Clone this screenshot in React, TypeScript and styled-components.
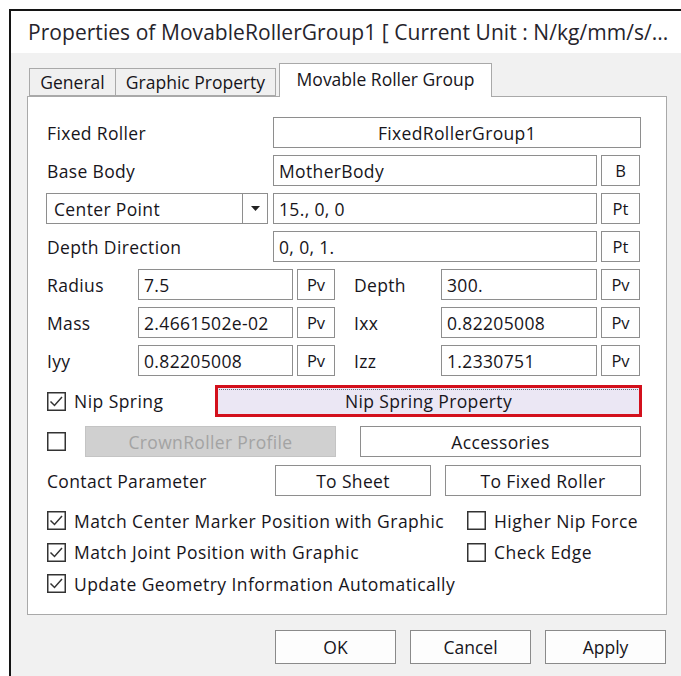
import styled, { createGlobalStyle } from "styled-components";

const GlobalStyle = createGlobalStyle`
  html, body {
    margin: 0;
    padding: 0;
    background: #ffffff;
    overflow: hidden;
  }
  body {
    font-family: "Open Sans", "Noto Sans", "Liberation Sans", sans-serif;
    color: #17151b;
  }
`;

function CheckMark({ checked }: { checked: boolean }) {
  return (
    <svg width="19" height="19" viewBox="0 0 19 19">
      <rect x="0.75" y="0.75" width="17.5" height="17.5" fill="#ffffff" stroke="#333333" strokeWidth="1.5" />
      {checked ? (
        <polyline points="3.5,9.5 7.5,13.5 15,5" fill="none" stroke="#333333" strokeWidth="1.5" />
      ) : null}
    </svg>
  );
}

function Check({ label, checked }: { label: string; checked: boolean }) {
  return (
    <CheckLine>
      <CheckMark checked={checked} />
      <span>{label}</span>
    </CheckLine>
  );
}

function App() {
  return (
    <>
      <GlobalStyle />
      <Dialog>
        <TitleBar>Properties of MovableRollerGroup1 [ Current Unit : N/kg/mm/s/...</TitleBar>
        <Body>
          <Tabs>
            <Tab $w={87}>General</Tab>
            <Tab $w={161}>Graphic Property</Tab>
            <Tab $w={213} $active>Movable Roller Group</Tab>
          </Tabs>
          <Panel>
            <Row>
              <Label $w={226}>Fixed Roller</Label>
              <PushButton $w={368}>FixedRollerGroup1</PushButton>
            </Row>
            <Row>
              <Label $w={226}>Base Body</Label>
              <Field $w={324}>MotherBody</Field>
              <SmallButton>B</SmallButton>
            </Row>
            <Row>
              <Combo>
                <ComboText>Center Point</ComboText>
                <ComboArrow>
                  <svg width="9" height="5" viewBox="0 0 9 5">
                    <polygon points="0,0 9,0 4.5,5" fill="#222" />
                  </svg>
                </ComboArrow>
              </Combo>
              <Field $w={324}>15., 0, 0</Field>
              <SmallButton>Pt</SmallButton>
            </Row>
            <Row>
              <Label $w={226}>Depth Direction</Label>
              <Field $w={324}>0, 0, 1.</Field>
              <SmallButton>Pt</SmallButton>
            </Row>
            <Row>
              <Label $w={91}>Radius</Label>
              <Field $w={155}>7.5</Field>
              <SmallButton $w={38}>Pv</SmallButton>
              <Label $w={87} $ml={19}>Depth</Label>
              <Field $w={156}>300.</Field>
              <SmallButton>Pv</SmallButton>
            </Row>
            <Row>
              <Label $w={91}>Mass</Label>
              <Field $w={155}>2.4661502e-02</Field>
              <SmallButton $w={38}>Pv</SmallButton>
              <Label $w={87} $ml={19}>Ixx</Label>
              <Field $w={156}>0.82205008</Field>
              <SmallButton>Pv</SmallButton>
            </Row>
            <Row>
              <Label $w={91}>Iyy</Label>
              <Field $w={155}>0.82205008</Field>
              <SmallButton $w={38}>Pv</SmallButton>
              <Label $w={87} $ml={19}>Izz</Label>
              <Field $w={156}>1.2330751</Field>
              <SmallButton>Pv</SmallButton>
            </Row>
            <Row $mt={2} $h={32}>
              <CheckSlot $w={168}>
                <Check label="Nip Spring" checked />
              </CheckSlot>
              <FocusButton>Nip Spring Property</FocusButton>
            </Row>
            <Row $mt={2}>
              <CheckSlot $w={38}>
                <CheckMark checked={false} />
              </CheckSlot>
              <PushButton $w={251} $disabled>CrownRoller Profile</PushButton>
              <Spacer $w={24} />
              <PushButton $w={281}>Accessories</PushButton>
            </Row>
            <Row $mt={1}>
              <Label $w={228}>Contact Parameter</Label>
              <PushButton $w={156}>To Sheet</PushButton>
              <Spacer $w={14} />
              <PushButton $w={196}>To Fixed Roller</PushButton>
            </Row>
            <Options>
              <Check label="Match Center Marker Position with Graphic" checked />
              <Check label="Higher Nip Force" checked={false} />
              <Check label="Match Joint Position with Graphic" checked />
              <Check label="Check Edge" checked={false} />
              <Check label="Update Geometry Information Automatically" checked />
            </Options>
          </Panel>
          <Footer>
            <DialogButton>OK</DialogButton>
            <DialogButton>Cancel</DialogButton>
            <DialogButton>Apply</DialogButton>
          </Footer>
        </Body>
      </Dialog>
    </>
  );
}

const Dialog = styled.div`
  margin: 9px 0 0 9px;
  height: 667px;
  border-top: 2px solid #141414;
  border-left: 2px solid #141414;
  background: #f1f1f1;
  display: flex;
  flex-direction: column;
  overflow: hidden;
`;

const TitleBar = styled.div`
  height: 42px;
  flex: none;
  background: #ffffff;
  display: flex;
  align-items: center;
  padding-left: 17px;
  font-size: 21px;
  letter-spacing: 0.05px;
  color: #26242c;
  white-space: nowrap;
`;

const Body = styled.div`
  padding-left: 16px;
  display: flex;
  flex-direction: column;
`;

const Tabs = styled.div`
  display: flex;
  align-items: flex-end;
  height: 43px;
  padding-left: 2px;
`;

const Tab = styled.div<{ $w: number; $active?: boolean }>`
  width: ${(p) => p.$w}px;
  height: ${(p) => (p.$active ? 34 : 28)}px;
  box-sizing: border-box;
  border: 1px solid #a9a9a9;
  border-bottom: ${(p) => (p.$active ? "none" : "1px solid #a9a9a9")};
  margin-left: ${(p) => (p.$active ? 4 : 0)}px;
  margin-right: ${(p) => (p.$active ? 0 : -1)}px;
  background: ${(p) => (p.$active ? "#ffffff" : "#f0f0f0")};
  display: flex;
  align-items: ${(p) => (p.$active ? "flex-start" : "center")};
  padding-top: ${(p) => (p.$active ? 3 : 0)}px;
  justify-content: center;
  font-size: 17.5px;
  white-space: nowrap;
  position: relative;
  z-index: ${(p) => (p.$active ? 1 : 0)};
  margin-bottom: ${(p) => (p.$active ? -1 : 0)}px;
`;

const Panel = styled.div`
  width: 640px;
  height: 519px;
  box-sizing: border-box;
  background: #ffffff;
  border: 1px solid #a9a9a9;
  padding: 20px 0 0 19px;
  display: flex;
  flex-direction: column;
  gap: 7px;
`;

const Row = styled.div<{ $mt?: number; $h?: number }>`
  display: flex;
  align-items: center;
  height: ${(p) => p.$h ?? 31}px;
  margin-top: ${(p) => p.$mt ?? 0}px;
  font-size: 17.5px;
  letter-spacing: 0.35px;
`;

const Label = styled.div<{ $w: number; $ml?: number }>`
  width: ${(p) => p.$w}px;
  margin-left: ${(p) => p.$ml ?? 0}px;
  flex: none;
  white-space: nowrap;
`;

const Field = styled.div<{ $w: number }>`
  width: ${(p) => p.$w}px;
  height: 31px;
  flex: none;
  box-sizing: border-box;
  border: 1px solid #8e8e8e;
  background: #ffffff;
  padding-left: 5px;
  display: flex;
  align-items: center;
  white-space: nowrap;
`;

const SmallButton = styled.div<{ $w?: number }>`
  width: ${(p) => p.$w ?? 39}px;
  height: 31px;
  margin-left: 4px;
  flex: none;
  box-sizing: border-box;
  border: 1px solid #8e8e8e;
  background: #ffffff;
  display: flex;
  align-items: center;
  justify-content: center;
  font-size: 16.5px;
  letter-spacing: 0;
`;

const PushButton = styled.div<{ $w: number; $disabled?: boolean }>`
  width: ${(p) => p.$w}px;
  height: 31px;
  flex: none;
  box-sizing: border-box;
  border: 1px solid ${(p) => (p.$disabled ? "#c4c4c4" : "#8e8e8e")};
  background: ${(p) => (p.$disabled ? "#d0d0d0" : "#ffffff")};
  color: ${(p) => (p.$disabled ? "#a3a3a3" : "inherit")};
  display: flex;
  align-items: center;
  justify-content: center;
  white-space: nowrap;
`;

const FocusButton = styled.div`
  width: 427px;
  height: 32px;
  flex: none;
  box-sizing: border-box;
  border: 3px solid #d3101c;
  background: #ebe7f4;
  display: flex;
  align-items: center;
  justify-content: center;
  position: relative;
  white-space: nowrap;
  /* dotted focus rectangle */
  &::before {
    content: "";
    position: absolute;
    left: 1px;
    right: 1px;
    top: 1px;
    border-top: 1px dotted #6a6a7a;
  }
`;

const Combo = styled.div`
  width: 222px;
  height: 31px;
  margin-left: -1px;
  margin-right: 5px;
  flex: none;
  box-sizing: border-box;
  border: 1px solid #8e8e8e;
  background: #ffffff;
  display: flex;
`;

const ComboText = styled.div`
  flex: 1;
  display: flex;
  align-items: center;
  padding-left: 7px;
`;

const ComboArrow = styled.div`
  width: 24px;
  border-left: 1px solid #8e8e8e;
  display: flex;
  align-items: center;
  justify-content: center;
`;

const CheckSlot = styled.div<{ $w: number }>`
  width: ${(p) => p.$w}px;
  flex: none;
  display: flex;
  align-items: center;
`;

const Spacer = styled.div<{ $w: number }>`
  width: ${(p) => p.$w}px;
  flex: none;
`;

const CheckLine = styled.div`
  display: flex;
  align-items: center;
  gap: 8px;
  font-size: 17.5px;
  letter-spacing: 0.45px;
  white-space: nowrap;
  svg {
    flex: none;
  }
`;

const Options = styled.div`
  display: grid;
  grid-template-columns: 420px auto;
  grid-auto-rows: 31.5px;
  align-items: center;
  margin-top: 2px;
`;

const Footer = styled.div`
  display: flex;
  gap: 14px;
  padding: 15px 0 0 248px;
`;

const DialogButton = styled.div`
  width: 121px;
  height: 34px;
  box-sizing: border-box;
  border: 1px solid #8a8a8a;
  background: #fdfdfd;
  display: flex;
  align-items: center;
  justify-content: center;
  font-size: 17.5px;
`;

export default App;
